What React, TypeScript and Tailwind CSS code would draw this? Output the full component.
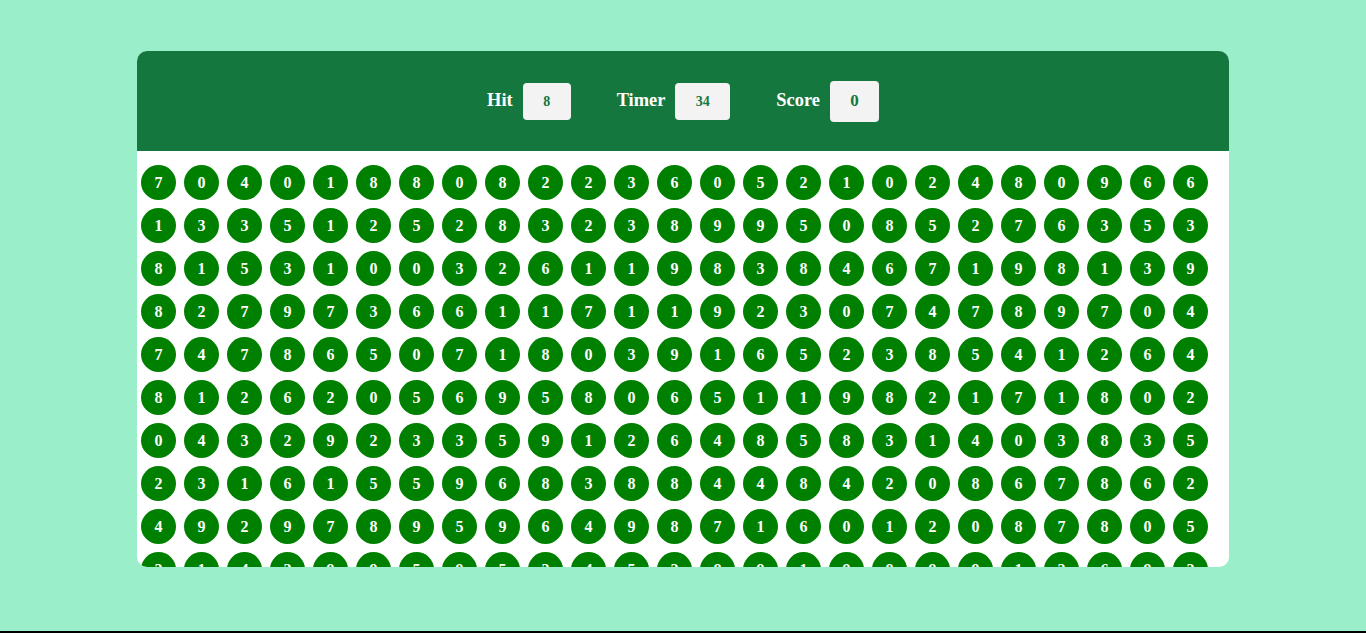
const rows = [
  '7040188082236052102480966',
  '1335125283238995085276353',
  '8153100326119838467198139',
  '8279736611711923074789704',
  '7478650718039165238541264',
  '8126205695806511982171802',
  '0432923359126485831403835',
  '2316155968388448420867862',
  '4929789596498716012087805',
  '2142995952452891989912692',
]

const stats = [
  { label: 'Hit', value: '8', box: 'w-[48px] h-[37px] text-[14px]' },
  { label: 'Timer', value: '34', box: 'w-[55px] h-[37px] text-[14px]' },
  { label: 'Score', value: '0', box: 'w-[49px] h-[41px] text-[17px]' },
]

export default function App() {
  const cells = rows.join('').split('')
  return (
    <div className="h-[633px] bg-[#9aeeca] border-b-2 border-black pt-[51px] font-['Liberation_Serif',serif]">
      <div className="mx-auto w-[1092px] h-[516px] rounded-[10px] overflow-hidden bg-white flex flex-col">
        {/* Header */}
        <div className="h-[100px] shrink-0 bg-[#14773d] flex items-center justify-center gap-[46px]">
          {stats.map((s) => (
            <div key={s.label} className="flex items-center gap-[10px]">
              <span className="text-white font-bold text-[18.4px]">{s.label}</span>
              <span
                className={`${s.box} bg-[#f3f3f3] rounded-[4px] flex items-center justify-center text-[#14773d] font-bold`}
              >
                {s.value}
              </span>
            </div>
          ))}
        </div>

        {/* Board */}
        <div className="flex flex-wrap content-start pt-[10px] overflow-hidden">
          {cells.map((n, i) => (
            <div
              key={i}
              className="m-1 w-[35px] h-[35px] rounded-full bg-[#008000] flex items-center justify-center text-white font-bold text-[16px]"
            >
              {n}
            </div>
          ))}
        </div>
      </div>
    </div>
  )
}
